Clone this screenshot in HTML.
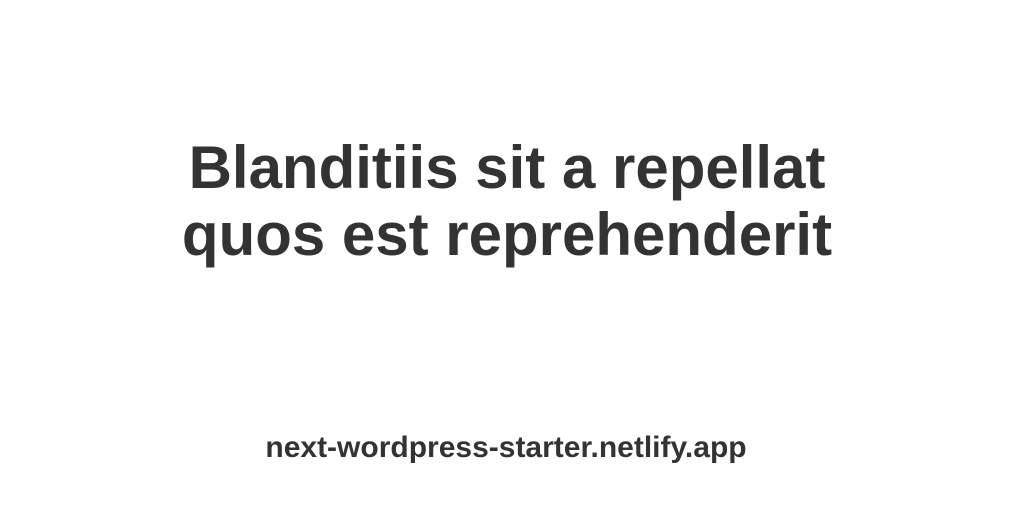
<!DOCTYPE html>
<html><head><style>
html,body{margin:0;padding:0;width:1012px;height:506px;background:#fff;overflow:hidden}
body{font-family:"Liberation Sans",sans-serif;color:#333;font-weight:bold;position:relative}
h1{position:absolute;top:134px;left:1px;width:1012px;text-align:center;font-size:60px;line-height:67px;margin:0;}
.u{position:absolute;top:430px;left:0;width:1012px;text-align:center;font-size:30px;line-height:36px}
</style></head><body>
<h1>Blanditiis sit a repellat<br>quos est reprehenderit</h1>
<div class="u">next-wordpress-starter.netlify.app</div>
</body></html>
